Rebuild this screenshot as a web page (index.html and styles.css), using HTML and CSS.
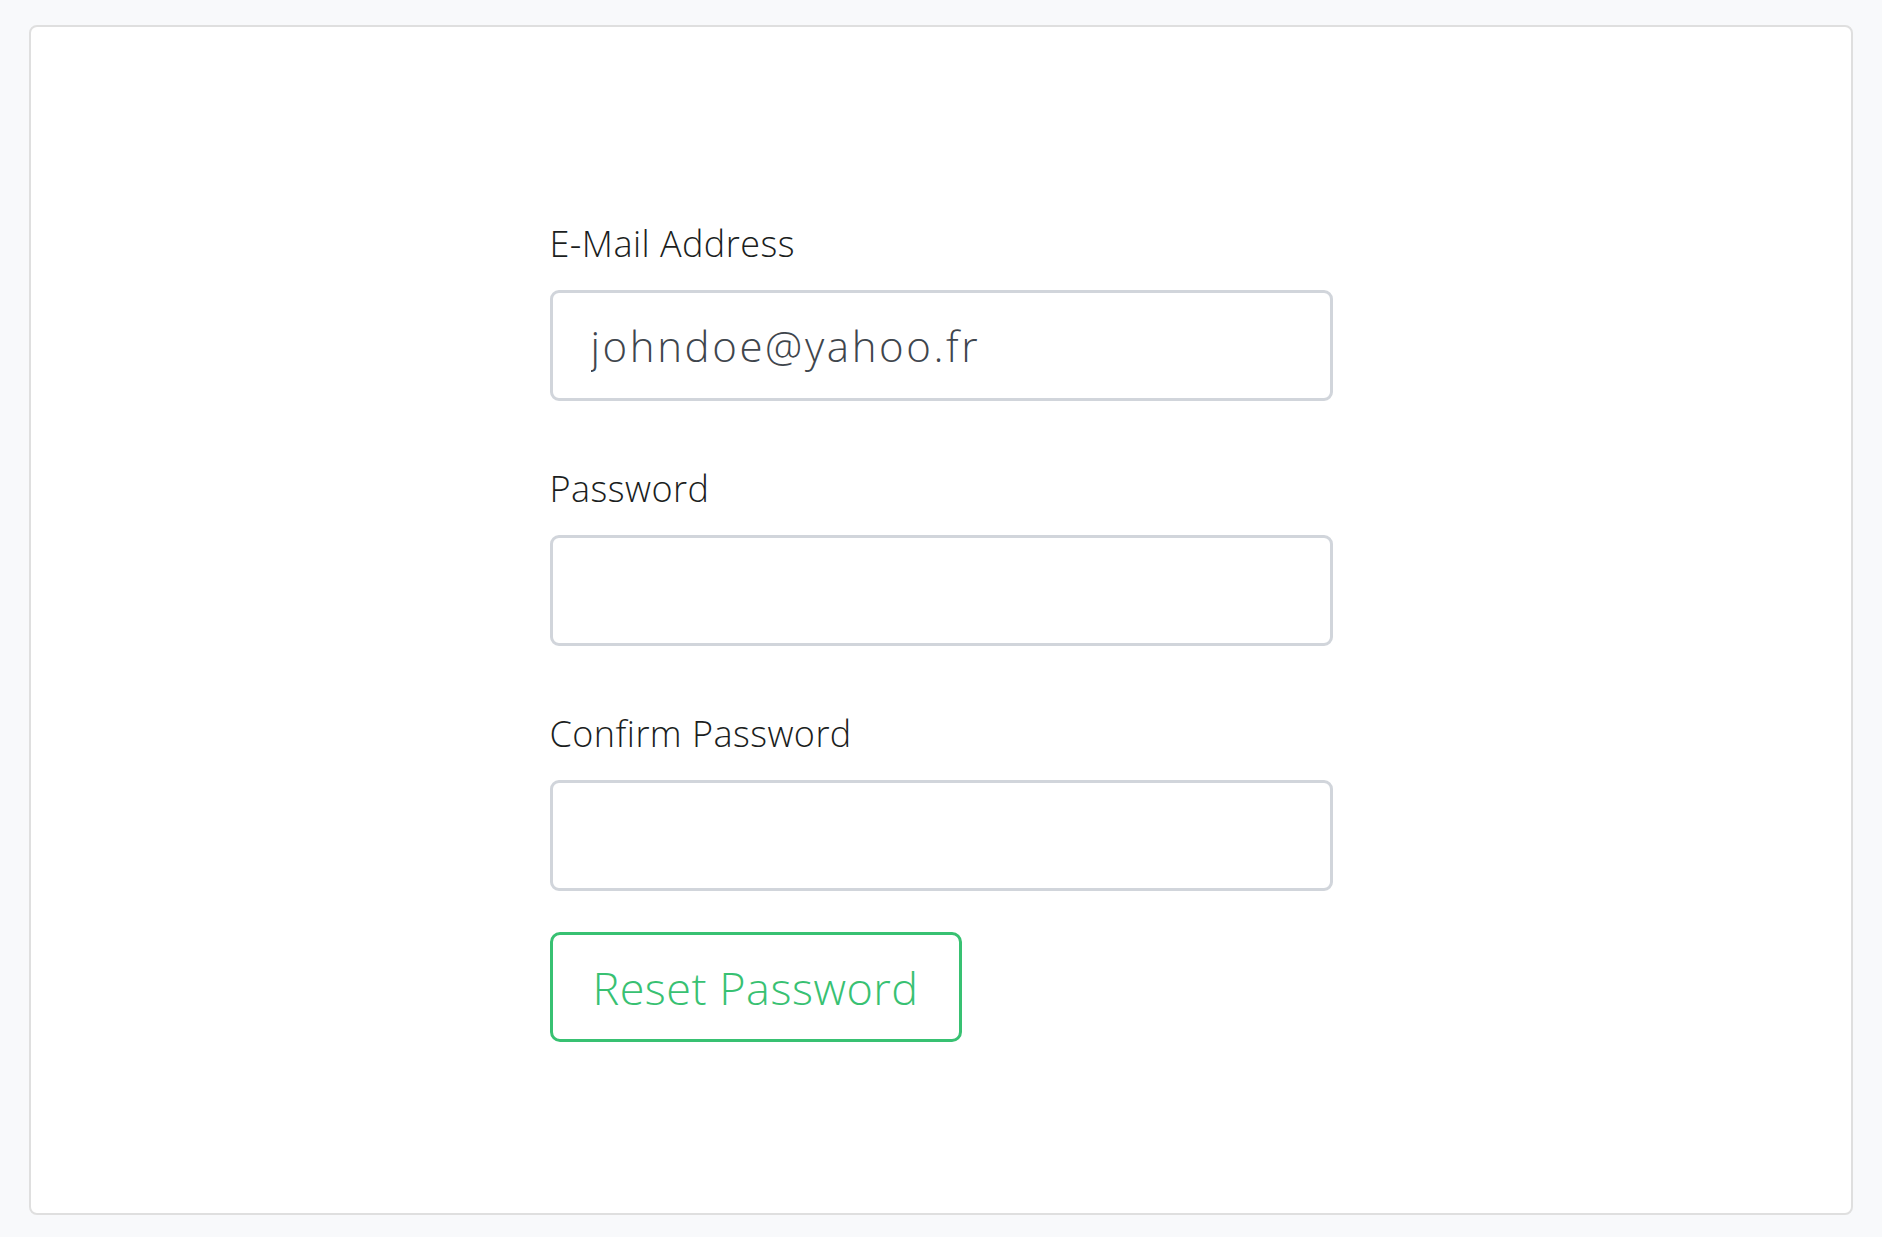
FILE: index.html
```html
<!DOCTYPE html>
<html lang="en">
<head>
<meta charset="utf-8">
<title>Reset Password</title>
<link rel="stylesheet" href="styles.css">
</head>
<body>
<div class="card">
  <form class="form">
    <div class="field">
      <label class="label" for="email">E-Mail Address</label>
      <input class="input" id="email" type="email" value="johndoe@yahoo.fr">
    </div>
    <div class="field">
      <label class="label" for="password">Password</label>
      <input class="input" id="password" type="password">
    </div>
    <div class="field">
      <label class="label" for="password-confirm">Confirm Password</label>
      <input class="input" id="password-confirm" type="password">
    </div>
    <div class="actions">
      <button class="btn" type="button">Reset Password</button>
    </div>
  </form>
</div>
</body>
</html>
```

FILE: styles.css
```css
html, body {
  margin: 0;
  padding: 0;
}
body {
  background: #f8f9fb;
  padding: 25px 29px 22px 29px;
  font-family: "Open Sans", "Lato", sans-serif;
  color: #212529;
}
.card {
  box-sizing: border-box;
  height: 1190px;
  background: #fff;
  border: 2px solid #dfdfdf;
  border-radius: 8px;
  padding-top: 195px;
}
.form {
  width: 783px;
  margin: 0 auto;
  display: flex;
  flex-direction: column;
}
.field {
  display: flex;
  flex-direction: column;
  margin-bottom: 66px;
}
.field:nth-child(3) {
  margin-bottom: 41px;
}
.label {
  font-size: 36px;
  line-height: 43px;
  font-weight: 340;
  letter-spacing: 0.45px;
  color: #1b1e21;
  margin-bottom: 25px;
}
.input {
  box-sizing: border-box;
  height: 111px;
  width: 100%;
  border: 3px solid #d1d5db;
  border-radius: 9px;
  padding: 0 38px;
  font-family: "Open Sans", "Lato", sans-serif;
  font-size: 42px;
  font-weight: 340;
  letter-spacing: 2.6px;
  color: #3f464d;
  background: #fff;
  outline: none;
}
.actions {
  display: flex;
}
.btn {
  box-sizing: border-box;
  height: 110px;
  width: 412px;
  border: 3px solid #38c172;
  border-radius: 10px;
  background: #fff;
  color: #38c172;
  font-family: "Open Sans", "Lato", sans-serif;
  font-size: 45px;
  font-weight: 340;
  letter-spacing: 0.5px;
  padding: 0;
  text-align: center;
}
```
